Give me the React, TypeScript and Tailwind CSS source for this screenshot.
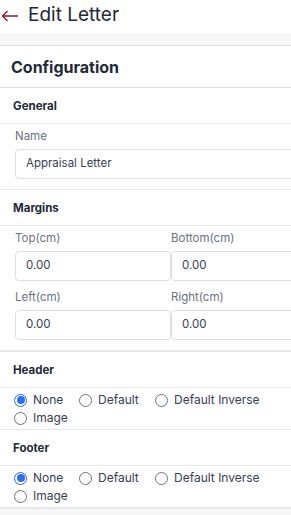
import React from "react";

const font = { fontFamily: "Inter, 'Noto Sans', sans-serif" };

function Radio({ label, checked }: { label: string; checked?: boolean }) {
  return (
    <label className="flex items-center gap-[6px] text-[12px] text-[#374151] leading-[18px]">
      <span
        className={
          checked
            ? "w-[13px] h-[13px] rounded-full border border-[#2563eb] flex items-center justify-center bg-white"
            : "w-[13px] h-[13px] rounded-full border border-[#6b7280] bg-white"
        }
      >
        {checked && <span className="w-[8px] h-[8px] rounded-full bg-[#2f6fe4]" />}
      </span>
      {label}
    </label>
  );
}

function RadioGroup() {
  return (
    <div className="pl-[14px] pt-[3px]">
      <div className="flex items-center">
        <div className="w-[65px]"><Radio label="None" checked /></div>
        <div className="w-[76px]"><Radio label="Default" /></div>
        <Radio label="Default Inverse" />
      </div>
      <Radio label="Image" />
    </div>
  );
}

function Field({ label, value }: { label: string; value: string }) {
  return (
    <div className="flex flex-col">
      <div className="text-[11.5px] text-[#6b7280] h-[21px] leading-[16px]">{label}</div>
      <div className="h-[30px] border border-[#dcdfe4] rounded-[4px] flex items-center px-[10px] text-[11.5px] text-[#374151] bg-white">
        {value}
      </div>
    </div>
  );
}

function SectionHead({ title }: { title: string }) {
  return (
    <div className="h-[36px] flex items-center pl-[13px] pt-[2px] text-[11.5px] font-bold text-[#1f2937] border-b border-[#e5e7eb]">
      {title}
    </div>
  );
}

export default function App() {
  return (
    <div className="w-[291px] h-[515px] overflow-hidden bg-white" style={font}>
      <div className="w-[340px]">
        <div className="h-[33px] flex items-center">
          <svg width="18" height="12" viewBox="0 0 18 12" className="ml-[1px] mt-[-2px]">
            <path d="M17 6H1.5M6.5 1L1.5 6l5 5" stroke="#8b1a2b" strokeWidth="1.3" fill="none" />
          </svg>
          <span className="ml-[9px] text-[19px] text-[#1f2937] mt-[-2px]">Edit Letter</span>
        </div>
        <div className="h-[13px] bg-[#f7f7f7] border-b border-[#e3e3e3]" />
        <div className="h-[42px] flex items-center pl-[11px] pt-[1px] text-[16px] font-bold text-[#1f2937] border-b border-[#e0e0e0]">
          Configuration
        </div>
        <SectionHead title="General" />
        <div className="pl-[15px] pt-[4px] pb-[10px] pr-[0px] border-b border-[#e5e7eb]">
          <Field label="Name" value="Appraisal Letter" />
        </div>
        <SectionHead title="Margins" />
        <div className="pl-[15px] pt-[4px] pb-[10px] grid grid-cols-[156px_156px] gap-x-[0px] gap-y-[8px] border-b-2 border-[#e5e7eb]">
          <Field label="Top(cm)" value="0.00" />
          <Field label="Bottom(cm)" value="0.00" />
          <Field label="Left(cm)" value="0.00" />
          <Field label="Right(cm)" value="0.00" />
        </div>
        <SectionHead title="Header" />
        <div className="border-b border-[#e5e7eb] h-[42px]">
          <RadioGroup />
        </div>
        <SectionHead title="Footer" />
        <div className="border-b-2 border-[#e5e7eb] h-[43px]">
          <RadioGroup />
        </div>
        <div className="h-[20px] bg-[#f7f7f7]" />
      </div>
    </div>
  );
}
